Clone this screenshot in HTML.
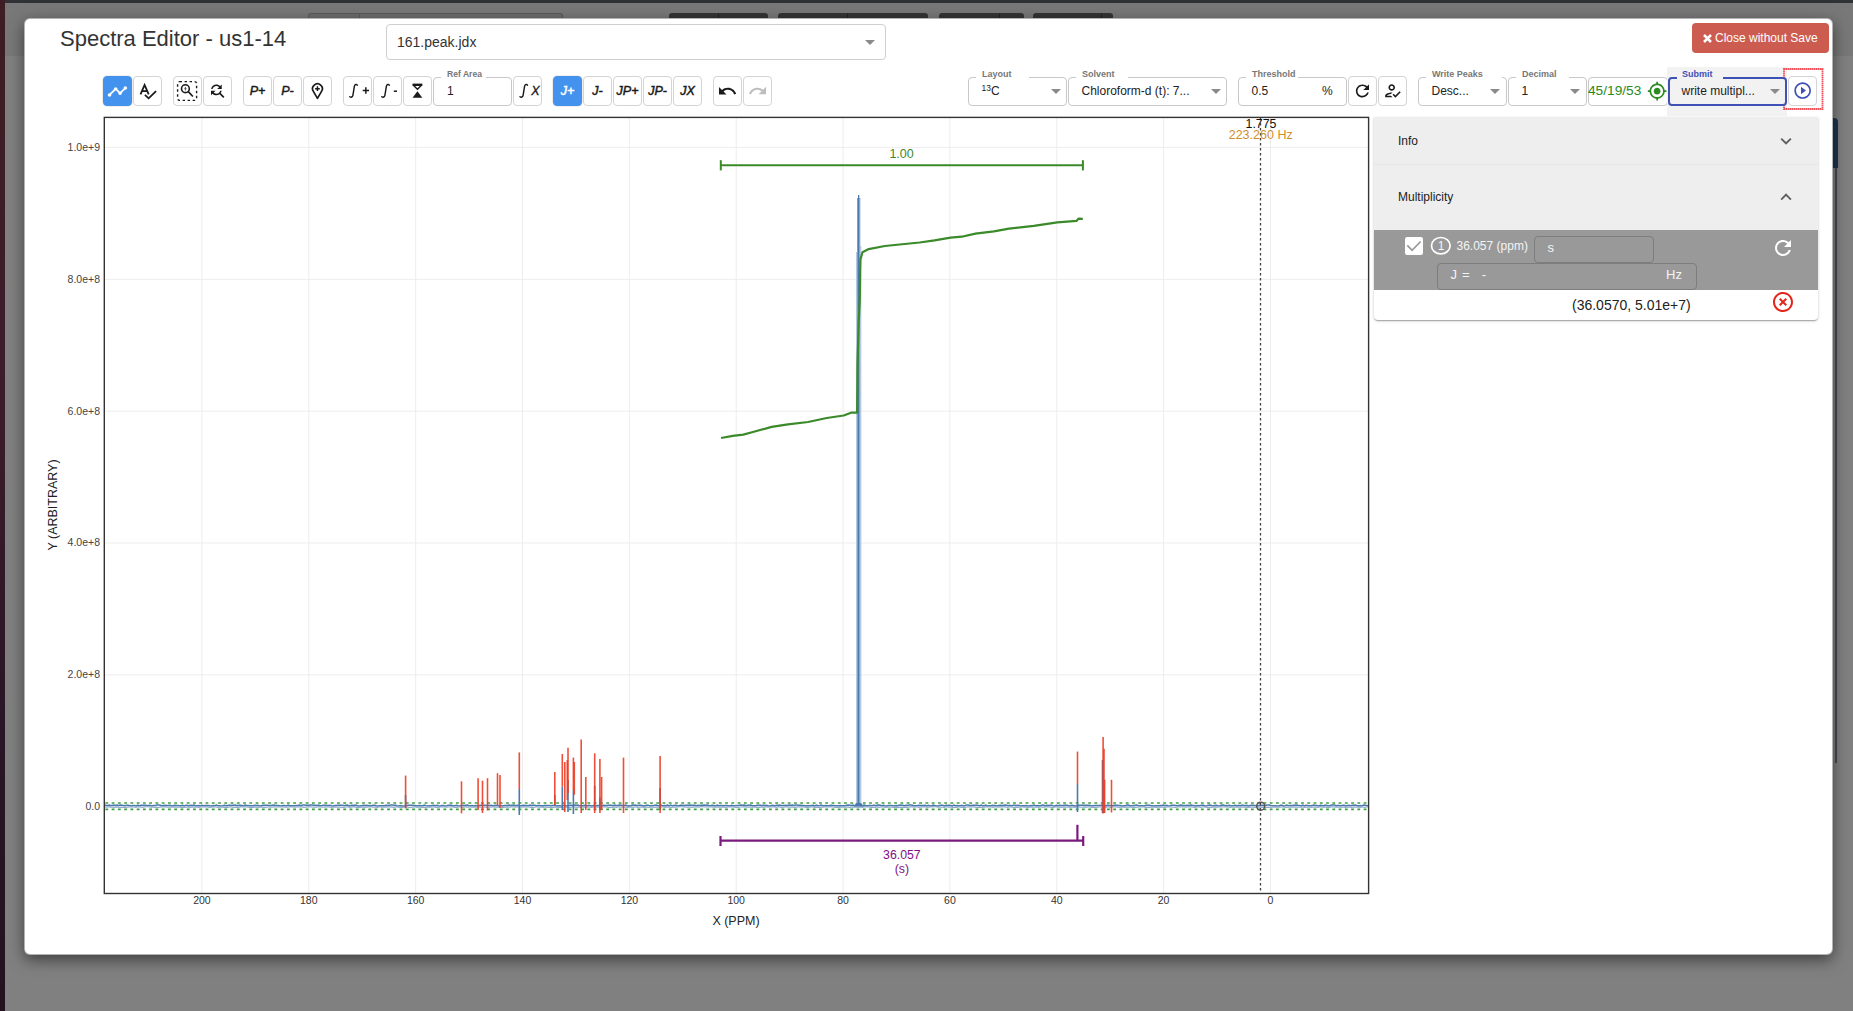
<!DOCTYPE html>
<html><head><meta charset="utf-8">
<style>
*{box-sizing:border-box;margin:0;padding:0}
html,body{width:1853px;height:1011px;overflow:hidden}
body{position:relative;background:#808080;font-family:"Liberation Sans",sans-serif;color:#333}
.abs{position:absolute}
#topbar{left:0;top:0;width:1853px;height:3px;background:#303134}
#lstrip{left:0;top:0;width:5px;height:1011px;background:linear-gradient(#3e1d24,#3b1c2a 40%,#2a1626 70%,#22121e)}
.bgbtn{position:absolute;top:13px;height:8px;border-radius:3px 3px 0 0;background:#343434}
.bgbtn i{position:absolute;top:0;width:1px;height:8px;background:#222}
#rstrip{left:1833px;top:118px;width:5px;height:50px;background:#1e3350;border-radius:0 4px 0 0}
#rline{left:1835px;top:168px;width:2px;height:595px;background:#474a50}
#modal{left:24px;top:18px;width:1809px;height:937px;background:#fff;border:1px solid rgba(0,0,0,.3);border-radius:6px;box-shadow:0 5px 15px rgba(0,0,0,.5)}
#title{left:60px;top:26px;font-size:22px;color:#333;white-space:nowrap;line-height:26px}
#filesel{left:385.5px;top:24px;width:500px;height:35.5px;border:1px solid #cfcfcf;border-radius:4px}
#filesel span{position:absolute;left:10.5px;top:9px;font-size:14px;line-height:16px;color:#333}
.caret{position:absolute;width:0;height:0;border-left:5px solid transparent;border-right:5px solid transparent;border-top:5px solid #8a8a8a}
.btn{position:absolute;top:76px;width:29px;height:29.5px;border:1px solid #d4d4d4;border-radius:4px;background:#fff}
.btn.on{background:#4393ee;border-color:#4393ee;box-shadow:0 0 0 0.6px rgba(215,200,185,.6)}
.btn svg{position:absolute;left:-1px;top:-1px;overflow:visible}
.btxt{position:absolute;left:-1px;top:0;width:29px;text-align:center;font-size:12.5px;font-style:italic;line-height:29px;color:#1a1a1a;-webkit-text-stroke:0.45px #1a1a1a}
.fld{position:absolute;top:76.5px;height:29px;border:1px solid #c8c8c8;border-radius:4px;background:#fff}
.notch{position:absolute;top:75px;height:3px;background:#fff}
.lbl{position:absolute;top:68.5px;font-size:9px;font-weight:bold;color:#777;line-height:11px;white-space:nowrap}
.val{position:absolute;top:84px;font-size:12px;color:#222;line-height:14px;white-space:nowrap}
#closebtn{left:1691.5px;top:23px;width:137px;height:30px;background:#cd5c50;border-radius:4px;color:#fff;font-size:12px;line-height:30px;white-space:nowrap}
#panel{left:1374px;top:117px;width:444px;height:202.5px;background:#fff;border-radius:0 0 4px 4px;box-shadow:0px 1px 3px 0px rgba(0,0,0,0.2),0px 1px 1px 0px rgba(0,0,0,0.14),0px 2px 1px -1px rgba(0,0,0,0.12)}
.ph{position:absolute;left:0;width:444px;background:#eeeeee}
.pht{position:absolute;left:24px;font-size:12px;color:#222;line-height:14px}
svg text{font-family:"Liberation Sans",sans-serif}
.g{stroke:#ededed;stroke-width:1}
.yl{font-size:10.5px;fill:#444;text-anchor:end}
.xl{font-size:10.5px;fill:#333;text-anchor:middle}
.at{font-size:12.5px;fill:#222;text-anchor:middle}
.th{stroke:#3f9e3f;stroke-width:1.7;stroke-dasharray:2.8 3.46;stroke-dashoffset:5.16}
.rp{stroke:#ee3c24;stroke-width:1.6;opacity:.9}
.sp{fill:none;stroke:#4a79ab;stroke-width:1.5}
.sp2{fill:none;stroke:#8eaad0;stroke-width:1.2}
.bp{stroke:#4a79ab;stroke-width:1.6}
.mp{fill:#4a7fb5;stroke:none}
.ic{fill:none;stroke:#3b8a2a;stroke-width:2.2;stroke-linejoin:round}
.ib{stroke:#3b8a2a;stroke-width:2}
.il{font-size:12.5px;fill:#3b8a2a;text-anchor:middle}
.mb{stroke:#7b1a7e;stroke-width:2.2}
.ml{font-size:12.3px;fill:#800f84;text-anchor:middle}
.cur{stroke:#444;stroke-width:1.3;stroke-dasharray:2.5 2.5}
.cc{fill:none;stroke:#555;stroke-width:1.5}
.c1{font-size:12.4px;fill:#111;text-anchor:middle}
.c2{font-size:12.5px;fill:#d18e2b;text-anchor:middle}
.fr{fill:none;stroke:#333;stroke-width:1.4}
</style></head>
<body>
<div class="abs" style="left:0;top:0;width:1853px;height:55.5px;background:#787878"></div>
<div id="topbar" class="abs"></div>
<div id="lstrip" class="abs"></div>
<div class="bgbtn" style="left:308px;width:255px;background:#6c6c6c;border:1px solid #5a5a5a;border-bottom:none"><i style="left:50px;background:#5a5a5a"></i></div>
<div class="bgbtn" style="left:669px;width:99px"><i style="left:49px"></i></div>
<div class="bgbtn" style="left:778px;width:150px"><i style="left:69px"></i></div>
<div class="bgbtn" style="left:939px;width:85px"><i style="left:60px"></i></div>
<div class="bgbtn" style="left:1033px;width:80px"><i style="left:68px"></i></div>
<div id="rstrip" class="abs"></div>
<div id="rline" class="abs"></div>
<div id="modal" class="abs"></div>

<div id="title" class="abs">Spectra Editor - us1-14</div>
<div id="filesel" class="abs"><span>161.peak.jdx</span><i class="caret" style="left:478px;top:15px"></i></div>

<div id="closebtn" class="abs"><svg class="abs" style="left:11px;top:11px" width="9" height="9" viewBox="0 0 9 9"><path d="M1,1L8,8M8,1L1,8" stroke="#fff" stroke-width="2.5" stroke-linecap="butt"/></svg><span style="position:absolute;left:23.5px;top:0">Close without Save</span></div>

<div class="btn on" style="left:103px"><svg width="29" height="30" viewBox="0 0 29 30"><path transform="translate(3.9,5) scale(0.878)" d="M23 8c0 1.1-.9 2-2 2-.18 0-.35-.02-.51-.07l-3.56 3.55c.05.16.07.34.07.52 0 1.1-.9 2-2 2s-2-.9-2-2c0-.18.02-.36.07-.52l-2.55-2.55c-.16.05-.34.07-.52.07s-.36-.02-.52-.07l-4.55 4.56c.05.16.07.33.07.51 0 1.1-.9 2-2 2s-2-.9-2-2 .9-2 2-2c.18 0 .35.02.51.07l4.56-4.55C8.02 9.36 8 9.18 8 9c0-1.1.9-2 2-2s2 .9 2 2c0 .18-.02.36-.07.52l2.55 2.55c.16-.05.34-.07.52-.07s.36.02.52.07l3.55-3.56C19.02 8.350 19 8.18 19 8c0-1.1.9-2 2-2s2 .9 2 2z" fill="#fff"/></svg></div>
<div class="btn" style="left:133px"><svg width="29" height="30" viewBox="0 0 29 30"><path d="M7.5,18.3 L11.6,9.0 L15.7,18.3 M8.9,15.2 H14.3" fill="none" stroke="#1a1a1a" stroke-width="1.8" stroke-linejoin="miter"/><path d="M11.9,18.9 L15.6,22.3 L23.1,15.2" fill="none" stroke="#1a1a1a" stroke-width="1.8"/></svg></div>
<div class="btn" style="left:173px"><svg width="29" height="30" viewBox="0 0 29 30"><rect x="4.6" y="5.6" width="19" height="18.8" rx="2" fill="none" stroke="#1a1a1a" stroke-width="1.4" stroke-dasharray="2.4 2.6"/><circle cx="12.4" cy="12.7" r="3.9" fill="none" stroke="#1a1a1a" stroke-width="1.6"/><path d="M15.3,15.7 L19.9,20.5" stroke="#1a1a1a" stroke-width="1.7"/><path d="M12.4,10.9 V14.5 M11.3,12.7 H13.5" stroke="#1a1a1a" stroke-width="0.9" opacity="0.8"/></svg></div>
<div class="btn" style="left:203px"><svg width="29" height="30" viewBox="0 0 29 30"><path transform="translate(4.94,5.44) scale(0.766)" d="M11 6c1.38 0 2.630.56 3.54 1.46L12 10h6V4l-2.05 2.05C14.68 4.78 12.93 4 11 4c-3.53 0-6.43 2.61-6.92 6H6.1c.46-2.28 2.48-4 4.9-4zm5.64 9.14c.66-.9 1.12-1.97 1.28-3.14H15.9c-.46 2.28-2.48 4-4.9 4-1.38 0-2.63-.56-3.54-1.46L10 12H4v6l2.05-2.05C7.32 17.22 9.07 18 11 18c1.55 0 2.98-.51 4.14-1.36L20 21.49 21.49 20l-4.85-4.86z" fill="#1a1a1a"/></svg></div>
<div class="btn" style="left:243px"><div class="btxt">P+</div></div>
<div class="btn" style="left:273px"><div class="btxt">P-</div></div>
<div class="btn" style="left:303px"><svg width="29" height="30" viewBox="0 0 29 30"><path d="M14.45,22.4 L10.5,15.6 A4.85,4.85 0 1 1 18.4,15.6 Z" fill="none" stroke="#1a1a1a" stroke-width="1.7" stroke-linejoin="round"/><path d="M14.45,10.2 V15.1 M12.1,12.65 H16.8" stroke="#1a1a1a" stroke-width="1.5"/></svg></div>
<div class="btn" style="left:343px"><svg width="29" height="30" viewBox="0 0 29 30"><path transform="translate(0,0)" d="M14.3,9.2 C13.6,8.1 11.9,8.2 11.4,10.1 L9.9,19.3 C9.5,21.2 7.9,21.6 6.8,20.7" fill="none" stroke="#1a1a1a" stroke-width="1.45" stroke-linecap="round"/><path d="M19.7,14.5 H26 M22.85,11.3 V17.7" stroke="#1a1a1a" stroke-width="1.5"/></svg></div>
<div class="btn" style="left:373px"><svg width="29" height="30" viewBox="0 0 29 30"><path transform="translate(2,0)" d="M14.3,9.2 C13.6,8.1 11.9,8.2 11.4,10.1 L9.9,19.3 C9.5,21.2 7.9,21.6 6.8,20.7" fill="none" stroke="#1a1a1a" stroke-width="1.45" stroke-linecap="round"/><path d="M20.8,15.2 H24" stroke="#1a1a1a" stroke-width="1.5"/></svg></div>
<div class="btn" style="left:403px"><svg width="29" height="30" viewBox="0 0 29 30"><path d="M9.6,8.5 H19.3" stroke="#1a1a1a" stroke-width="1.8"/><path d="M10.6,9.4 L14.45,13.3 L18.3,9.4 Z" fill="none" stroke="#1a1a1a" stroke-width="1.4" stroke-linejoin="miter"/><path d="M14.45,15.3 L19.3,21.8 H9.6 Z" fill="#1a1a1a"/></svg></div>
<div class="fld" style="left:433px;width:79px"></div>
<div class="notch" style="left:441px;width:45px"></div>
<div class="lbl" style="left:447px;font-size:8.6px">Ref Area</div>
<div class="val" style="left:447px;font-size:12px">1</div>
<div class="btn" style="left:513px"><svg width="29" height="30" viewBox="0 0 29 30"><path transform="translate(0.2,0)" d="M14.3,9.2 C13.6,8.1 11.9,8.2 11.4,10.1 L9.9,19.3 C9.5,21.2 7.9,21.6 6.8,20.7" fill="none" stroke="#1a1a1a" stroke-width="1.45" stroke-linecap="round"/><text x="22.4" y="18.7" font-size="12.5" font-style="italic" text-anchor="middle" fill="#1a1a1a" stroke="#1a1a1a" stroke-width="0.35">X</text></svg></div>
<div class="btn on" style="left:553px"><div class="btxt" style="color:#fff;-webkit-text-stroke-color:#fff">J+</div></div>
<div class="btn" style="left:583px"><div class="btxt">J-</div></div>
<div class="btn" style="left:613px"><div class="btxt">JP+</div></div>
<div class="btn" style="left:643px"><div class="btxt">JP-</div></div>
<div class="btn" style="left:673px"><div class="btxt">JX</div></div>
<div class="btn" style="left:713px"><svg width="29" height="30" viewBox="0 0 29 30"><path transform="translate(4.3,5) scale(0.84)" d="M12.5 8c-2.65 0-5.05.99-6.9 2.6L2 7v9h9l-3.62-3.62c1.39-1.16 3.16-1.88 5.12-1.88 3.54 0 6.55 2.31 7.6 5.5l2.37-.78C21.08 11.03 17.15 8 12.5 8z" fill="#1a1a1a"/></svg></div>
<div class="btn" style="left:743px"><svg width="29" height="30" viewBox="0 0 29 30"><path transform="translate(4.8,5) scale(0.83)" d="M18.4 10.6C16.55 8.99 14.15 8 11.5 8c-4.65 0-8.58 3.03-9.960 7.22L3.9 16c1.05-3.19 4.05-5.5 7.6-5.5 1.95 0 3.73.72 5.12 1.88L13 16h9V7l-3.6 3.6z" fill="#bdbdbd"/></svg></div>
<div class="fld" style="left:968px;width:99px;background:#fff;border:1px solid #c8c8c8"></div><div class="notch" style="left:976px;width:53px;background:#fff"></div><div class="lbl" style="left:982px;color:#777">Layout</div>
<div class="val" style="left:981.5px"><span style="font-size:8.5px;position:relative;top:-4px">13</span>C</div>
<i class="caret" style="left:1050.5px;top:89px"></i>
<div class="fld" style="left:1068px;width:159px;background:#fff;border:1px solid #c8c8c8"></div><div class="notch" style="left:1076px;width:52px;background:#fff"></div><div class="lbl" style="left:1082px;color:#777">Solvent</div>
<div class="val" style="left:1081.5px">Chloroform-d (t): 7...</div>
<i class="caret" style="left:1210.5px;top:89px"></i>
<div class="fld" style="left:1238px;width:109px;background:#fff;border:1px solid #c8c8c8"></div><div class="notch" style="left:1246px;width:52px;background:#fff"></div><div class="lbl" style="left:1252px;color:#777">Threshold</div>
<div class="val" style="left:1251.5px">0.5</div>
<div class="val" style="left:1322px">%</div>
<div class="btn" style="left:1348px"><svg width="29" height="30" viewBox="0 0 29 30"><path transform="translate(4.6,5.1) scale(0.82)" d="M17.65 6.35C16.2 4.9 14.21 4 12 4c-4.42 0-7.99 3.58-7.99 8s3.57 8 7.99 8c3.73 0 6.84-2.55 7.73-6h-2.08c-.82 2.33-3.04 4-5.65 4-3.31 0-6-2.69-6-6s2.69-6 6-6c1.66 0 3.14.69 4.22 1.78L13 11h7V4l-2.35 2.35z" fill="#1a1a1a"/></svg></div>
<div class="btn" style="left:1378px"><svg width="29" height="30" viewBox="0 0 29 30"><path transform="translate(4.7,4.9) scale(0.82)" d="M5 18c.2-.63 2.57-1.68 4.96-1.94l2.04-2c-.39-.04-.68-.06-1-.06-2.67 0-8 1.34-8 4v2h9l-2-2H5zm6-6c2.21 0 4-1.790 4-4s-1.79-4-4-4-4 1.79-4 4 1.79 4 4 4zm0-6c1.1 0 2 .9 2 2s-.9 2-2 2-2-.9-2-2 .9-2 2-2zM15.47 20.5L12 17l1.4-1.41 2.07 2.08 5.13-5.17 1.4 1.41z" fill="#1a1a1a"/></svg></div>
<div class="fld" style="left:1418px;width:89px;background:#fff;border:1px solid #c8c8c8"></div><div class="notch" style="left:1426px;width:76px;background:#fff"></div><div class="lbl" style="left:1432px;color:#777">Write Peaks</div>
<div class="val" style="left:1431.5px">Desc...</div>
<i class="caret" style="left:1490px;top:89px"></i>
<div class="fld" style="left:1508px;width:79px;background:#fff;border:1px solid #c8c8c8"></div><div class="notch" style="left:1516px;width:53px;background:#fff"></div><div class="lbl" style="left:1522px;color:#777">Decimal</div>
<div class="val" style="left:1521.5px">1</div>
<i class="caret" style="left:1570px;top:89px"></i>
<div class="fld" style="left:1588px;width:79.5px"></div>
<div class="val" style="left:1588px;top:83px;color:#2a8a1e;font-size:13.7px;line-height:16px">45/19/53</div>
<svg class="abs" style="left:1647.4px;top:80.9px;overflow:visible" width="20" height="20" viewBox="0 0 20 20"><path transform="translate(0,0) scale(0.845)" d="M12 8c-2.21 0-4 1.79-4 4s1.79 4 4 4 4-1.79 4-4-1.79-4-4-4zm8.94 3c-.46-4.17-3.77-7.48-7.94-7.94V1h-2v2.06C6.83 3.52 3.52 6.83 3.06 11H1v2h2.06c.46 4.17 3.77 7.48 7.94 7.94V23h2v-2.06c4.17-.46 7.48-3.77 7.94-7.94H23v-2h-2.06zM12 19c-3.87 0-7-3.13-7-7s3.13-7 7-7 7 3.13 7 7-3.13 7-7 7z" fill="#2a8a1e"/></svg>
<div class="abs" style="left:1667px;top:67px;width:120px;height:49px;background:#f2f2f2"></div>
<svg class="abs" style="left:1783px;top:67.5px" width="41" height="42"><rect x="1" y="1" width="38.5" height="40" fill="none" stroke="#f2505a" stroke-width="1.8" stroke-dasharray="1.6 0.4"/></svg>
<div class="fld" style="left:1668px;width:119px;background:#f2f2f2;border:2px solid #3f51b5"></div><div class="notch" style="left:1677px;width:46px;background:#f2f2f2;top:74px;height:6px"></div><div class="lbl" style="left:1682px;color:#3f51b5">Submit</div>
<div class="val" style="left:1681.5px">write multipl...</div>
<i class="caret" style="left:1770px;top:89px"></i>
<div class="btn" style="left:1788px"><svg width="29" height="30" viewBox="0 0 29 30"><path transform="translate(4.7,4.6) scale(0.83)" d="M10 16.5l6-4.5-6-4.5v9zM12 2C6.48 2 2 6.48 2 12s4.48 10 10 10 10-4.48 10-10S17.52 2 12 2zm0 18c-4.41 0-8-3.59-8-8s3.59-8 8-8 8 3.59 8 8-3.59 8-8 8z" fill="#3f51b5"/></svg></div>

<svg class="abs" style="left:0;top:0" width="1853" height="1011" viewBox="0 0 1853 1011">
<line x1="201.9" y1="117.4" x2="201.9" y2="893.5" class="g"/>
<line x1="308.8" y1="117.4" x2="308.8" y2="893.5" class="g"/>
<line x1="415.7" y1="117.4" x2="415.7" y2="893.5" class="g"/>
<line x1="522.5" y1="117.4" x2="522.5" y2="893.5" class="g"/>
<line x1="629.4" y1="117.4" x2="629.4" y2="893.5" class="g"/>
<line x1="736.2" y1="117.4" x2="736.2" y2="893.5" class="g"/>
<line x1="843.1" y1="117.4" x2="843.1" y2="893.5" class="g"/>
<line x1="949.9" y1="117.4" x2="949.9" y2="893.5" class="g"/>
<line x1="1056.8" y1="117.4" x2="1056.8" y2="893.5" class="g"/>
<line x1="1163.6" y1="117.4" x2="1163.6" y2="893.5" class="g"/>
<line x1="1270.5" y1="117.4" x2="1270.5" y2="893.5" class="g"/>
<line x1="104.3" y1="806.8" x2="1368.6" y2="806.8" class="g"/>
<line x1="104.3" y1="674.9" x2="1368.6" y2="674.9" class="g"/>
<line x1="104.3" y1="543.0" x2="1368.6" y2="543.0" class="g"/>
<line x1="104.3" y1="411.2" x2="1368.6" y2="411.2" class="g"/>
<line x1="104.3" y1="279.3" x2="1368.6" y2="279.3" class="g"/>
<line x1="104.3" y1="147.4" x2="1368.6" y2="147.4" class="g"/>
<text x="100" y="810.1" class="yl">0.0</text>
<text x="100" y="678.2" class="yl">2.0e+8</text>
<text x="100" y="546.3" class="yl">4.0e+8</text>
<text x="100" y="414.5" class="yl">6.0e+8</text>
<text x="100" y="282.6" class="yl">8.0e+8</text>
<text x="100" y="150.7" class="yl">1.0e+9</text>
<text x="201.9" y="903.5" class="xl">200</text>
<text x="308.8" y="903.5" class="xl">180</text>
<text x="415.7" y="903.5" class="xl">160</text>
<text x="522.5" y="903.5" class="xl">140</text>
<text x="629.4" y="903.5" class="xl">120</text>
<text x="736.2" y="903.5" class="xl">100</text>
<text x="843.1" y="903.5" class="xl">80</text>
<text x="949.9" y="903.5" class="xl">60</text>
<text x="1056.8" y="903.5" class="xl">40</text>
<text x="1163.6" y="903.5" class="xl">20</text>
<text x="1270.5" y="903.5" class="xl">0</text>
<line x1="104.3" y1="803.0" x2="1368.6" y2="803.0" class="th"/>
<line x1="104.3" y1="809.3" x2="1368.6" y2="809.3" class="th"/>
<polyline class="sp" points="104.3,805.34 105.9,805.19 107.5,805.64 109.1,805.12 110.7,805.53 112.3,805.38 113.9,805.10 115.5,805.51 117.1,805.08 118.7,805.44 120.3,805.11 121.9,805.13 123.5,805.43 125.1,805.79 126.7,805.16 128.3,805.25 129.9,805.61 131.5,805.90 133.1,805.57 134.7,805.41 136.3,805.93 137.9,805.09 139.5,805.82 141.1,805.31 142.7,805.18 144.3,805.16 145.9,805.33 147.5,805.78 149.1,805.21 150.7,805.57 152.3,805.63 153.9,805.39 155.5,805.54 157.1,805.11 158.7,805.10 160.3,805.24 161.9,805.66 163.5,805.43 165.1,805.33 166.7,805.58 168.3,805.46 169.9,805.32 171.5,805.76 173.1,805.68 174.7,805.27 176.3,805.57 177.9,805.52 179.5,805.84 181.1,805.71 182.7,805.31 184.3,805.93 185.9,805.16 187.5,805.43 189.1,805.73 190.7,805.19 192.3,805.49 193.9,805.09 195.5,805.65 197.1,805.74 198.7,805.57 200.3,805.84 201.9,805.33 203.5,805.68 205.1,805.58 206.7,805.57 208.3,805.46 209.9,805.81 211.5,805.90 213.1,805.48 214.7,805.65 216.3,805.10 217.9,805.68 219.5,805.63 221.1,805.94 222.7,805.79 224.3,805.31 225.9,805.40 227.5,805.65 229.1,805.07 230.7,805.47 232.3,805.20 233.9,805.16 235.5,805.10 237.1,805.74 238.7,805.17 240.3,805.27 241.9,805.40 243.5,805.83 245.1,805.12 246.7,805.45 248.3,805.54 249.9,805.85 251.5,805.79 253.1,805.83 254.7,805.30 256.3,805.42 257.9,805.37 259.5,805.85 261.1,805.91 262.7,805.19 264.3,805.21 265.9,805.26 267.5,805.26 269.1,805.49 270.7,805.58 272.3,805.29 273.9,805.05 275.5,805.43 277.1,805.38 278.7,805.56 280.3,805.91 281.9,805.67 283.5,805.51 285.1,805.61 286.7,805.66 288.3,805.10 289.9,805.86 291.5,805.75 293.1,805.84 294.7,805.77 296.3,805.40 297.9,805.41 299.5,805.14 301.1,805.62 302.7,805.11 304.3,805.11 305.9,805.24 307.5,805.20 309.1,805.36 310.7,805.10 312.3,805.05 313.9,805.19 315.5,805.14 317.1,805.38 318.7,805.07 320.3,805.84 321.9,805.60 323.5,805.18 325.1,805.28 326.7,805.36 328.3,805.38 329.9,805.16 331.5,805.81 333.1,805.94 334.7,805.47 336.3,805.49 337.9,805.13 339.5,805.14 341.1,805.36 342.7,805.29 344.3,805.80 345.9,805.20 347.5,805.07 349.1,805.91 350.7,805.53 352.3,805.18 353.9,805.54 355.5,805.07 357.1,805.53 358.7,805.93 360.3,805.83 361.9,805.68 363.5,805.29 365.1,805.38 366.7,805.20 368.3,805.74 369.9,805.53 371.5,805.75 373.1,805.35 374.7,805.25 376.3,805.78 377.9,805.94 379.5,805.82 381.1,805.78 382.7,805.79 384.3,805.72 385.9,805.25 387.5,805.52 389.1,805.37 390.7,805.08 392.3,805.08 393.9,805.30 395.5,805.28 397.1,805.67 398.7,805.91 400.3,805.45 401.9,805.89 403.5,805.94 405.1,805.91 406.7,805.38 408.3,805.25 409.9,805.25 411.5,805.23 413.1,805.23 414.7,805.61 416.3,805.86 417.9,805.81 419.5,805.48 421.1,805.64 422.7,805.77 424.3,805.13 425.9,805.64 427.5,805.87 429.1,805.75 430.7,805.73 432.3,805.48 433.9,805.21 435.5,805.76 437.1,805.35 438.7,805.77 440.3,805.92 441.9,805.41 443.5,805.41 445.1,805.90 446.7,805.70 448.3,805.20 449.9,805.16 451.5,805.19 453.1,805.86 454.7,805.78 456.3,805.18 457.9,805.79 459.5,805.93 461.1,805.64 462.7,805.37 464.3,805.54 465.9,805.17 467.5,805.06 469.1,805.92 470.7,805.63 472.3,805.52 473.9,805.89 475.5,805.44 477.1,805.83 478.7,805.79 480.3,805.24 481.9,805.28 483.5,805.31 485.1,805.27 486.7,805.58 488.3,805.28 489.9,805.43 491.5,805.17 493.1,805.87 494.7,805.37 496.3,805.46 497.9,805.58 499.5,805.86 501.1,805.43 502.7,805.88 504.3,805.50 505.9,805.53 507.5,805.52 509.1,805.07 510.7,805.45 512.3,805.21 513.9,805.05 515.5,805.77 517.1,805.21 518.7,805.48 520.3,805.70 521.9,805.55 523.5,805.34 525.1,805.52 526.7,805.55 528.3,805.76 529.9,805.15 531.5,805.55 533.1,805.27 534.7,805.30 536.3,805.75 537.9,805.51 539.5,805.56 541.1,805.73 542.7,805.87 544.3,805.45 545.9,805.60 547.5,805.50 549.1,805.51 550.7,805.67 552.3,805.46 553.9,805.53 555.5,805.48 557.1,805.90 558.7,805.68 560.3,805.84 561.9,805.90 563.5,805.28 565.1,805.55 566.7,805.90 568.3,805.81 569.9,805.17 571.5,805.16 573.1,805.45 574.7,805.12 576.3,805.27 577.9,805.12 579.5,805.65 581.1,805.76 582.7,805.86 584.3,805.19 585.9,805.69 587.5,805.64 589.1,805.18 590.7,805.84 592.3,805.92 593.9,805.25 595.5,805.91 597.1,805.41 598.7,805.49 600.3,805.94 601.9,805.80 603.5,805.20 605.1,805.44 606.7,805.51 608.3,805.36 609.9,805.23 611.5,805.34 613.1,805.70 614.7,805.07 616.3,805.55 617.9,805.45 619.5,805.07 621.1,805.35 622.7,805.61 624.3,805.51 625.9,805.11 627.5,805.94 629.1,805.76 630.7,805.92 632.3,805.14 633.9,805.29 635.5,805.09 637.1,805.75 638.7,805.29 640.3,805.17 641.9,805.43 643.5,805.87 645.1,805.79 646.7,805.28 648.3,805.18 649.9,805.88 651.5,805.56 653.1,805.68 654.7,805.13 656.3,805.10 657.9,805.67 659.5,805.43 661.1,805.12 662.7,805.89 664.3,805.62 665.9,805.77 667.5,805.13 669.1,805.82 670.7,805.11 672.3,805.83 673.9,805.46 675.5,805.36 677.1,805.55 678.7,805.88 680.3,805.29 681.9,805.17 683.5,805.52 685.1,805.26 686.7,805.15 688.3,805.20 689.9,805.10 691.5,805.23 693.1,805.33 694.7,805.32 696.3,805.73 697.9,805.31 699.5,805.50 701.1,805.21 702.7,805.36 704.3,805.07 705.9,805.28 707.5,805.06 709.1,805.71 710.7,805.55 712.3,805.22 713.9,805.48 715.5,805.89 717.1,805.15 718.7,805.79 720.3,805.44 721.9,805.50 723.5,805.80 725.1,805.40 726.7,805.51 728.3,805.67 729.9,805.93 731.5,805.36 733.1,805.80 734.7,805.69 736.3,805.62 737.9,805.41 739.5,805.36 741.1,805.10 742.7,805.17 744.3,805.11 745.9,805.72 747.5,805.28 749.1,805.20 750.7,805.13 752.3,805.81 753.9,805.83 755.5,805.65 757.1,805.30 758.7,805.27 760.3,805.31 761.9,805.46 763.5,805.19 765.1,805.45 766.7,805.29 768.3,805.92 769.9,805.93 771.5,805.54 773.1,805.27 774.7,805.92 776.3,805.33 777.9,805.37 779.5,805.05 781.1,805.39 782.7,805.48 784.3,805.50 785.9,805.23 787.5,805.50 789.1,805.05 790.7,805.29 792.3,805.13 793.9,805.41 795.5,805.09 797.1,805.07 798.7,805.32 800.3,805.26 801.9,805.58 803.5,805.53 805.1,805.73 806.7,805.64 808.3,805.69 809.9,805.84 811.5,805.40 813.1,805.34 814.7,805.94 816.3,805.18 817.9,805.70 819.5,805.63 821.1,805.09 822.7,805.80 824.3,805.85 825.9,805.61 827.5,805.71 829.1,805.78 830.7,805.18 832.3,805.52 833.9,805.50 835.5,805.80 837.1,805.77 838.7,805.79 840.3,805.58 841.9,805.85 843.5,805.66 845.1,805.67 846.7,805.26 848.3,805.08 849.9,805.17 851.5,805.37 853.1,805.14 854.7,805.80 856.3,805.55 857.9,805.61 859.5,805.61 861.1,805.66 862.7,805.49 864.3,805.05 865.9,805.77 867.5,805.72 869.1,805.50 870.7,805.53 872.3,805.64 873.9,805.11 875.5,805.71 877.1,805.28 878.7,805.12 880.3,805.29 881.9,805.71 883.5,805.23 885.1,805.72 886.7,805.93 888.3,805.49 889.9,805.39 891.5,805.48 893.1,805.67 894.7,805.74 896.3,805.61 897.9,805.63 899.5,805.12 901.1,805.18 902.7,805.28 904.3,805.72 905.9,805.32 907.5,805.56 909.1,805.06 910.7,805.10 912.3,805.29 913.9,805.65 915.5,805.67 917.1,805.66 918.7,805.31 920.3,805.51 921.9,805.47 923.5,805.47 925.1,805.16 926.7,805.85 928.3,805.23 929.9,805.93 931.5,805.89 933.1,805.07 934.7,805.46 936.3,805.79 937.9,805.92 939.5,805.45 941.1,805.29 942.7,805.24 944.3,805.90 945.9,805.24 947.5,805.57 949.1,805.18 950.7,805.52 952.3,805.91 953.9,805.17 955.5,805.79 957.1,805.51 958.7,805.85 960.3,805.68 961.9,805.26 963.5,805.86 965.1,805.49 966.7,805.07 968.3,805.05 969.9,805.49 971.5,805.46 973.1,805.32 974.7,805.18 976.3,805.36 977.9,805.33 979.5,805.81 981.1,805.05 982.7,805.73 984.3,805.81 985.9,805.16 987.5,805.88 989.1,805.69 990.7,805.86 992.3,805.31 993.9,805.38 995.5,805.40 997.1,805.95 998.7,805.58 1000.3,805.37 1001.9,805.44 1003.5,805.30 1005.1,805.09 1006.7,805.14 1008.3,805.80 1009.9,805.31 1011.5,805.89 1013.1,805.27 1014.7,805.29 1016.3,805.51 1017.9,805.22 1019.5,805.39 1021.1,805.91 1022.7,805.85 1024.3,805.78 1025.9,805.62 1027.5,805.87 1029.1,805.90 1030.7,805.54 1032.3,805.70 1033.9,805.09 1035.5,805.71 1037.1,805.46 1038.7,805.73 1040.3,805.63 1041.9,805.31 1043.5,805.09 1045.1,805.88 1046.7,805.16 1048.3,805.47 1049.9,805.36 1051.5,805.32 1053.1,805.72 1054.7,805.93 1056.3,805.28 1057.9,805.64 1059.5,805.32 1061.1,805.55 1062.7,805.40 1064.3,805.20 1065.9,805.20 1067.5,805.24 1069.1,805.87 1070.7,805.50 1072.3,805.25 1073.9,805.87 1075.5,805.95 1077.1,805.45 1078.7,805.18 1080.3,805.22 1081.9,805.13 1083.5,805.36 1085.1,805.13 1086.7,805.27 1088.3,805.28 1089.9,805.56 1091.5,805.85 1093.1,805.72 1094.7,805.42 1096.3,805.42 1097.9,805.52 1099.5,805.39 1101.1,805.35 1102.7,805.11 1104.3,805.30 1105.9,805.92 1107.5,805.16 1109.1,805.50 1110.7,805.62 1112.3,805.83 1113.9,805.24 1115.5,805.29 1117.1,805.27 1118.7,805.41 1120.3,805.45 1121.9,805.91 1123.5,805.81 1125.1,805.84 1126.7,805.07 1128.3,805.08 1129.9,805.69 1131.5,805.86 1133.1,805.48 1134.7,805.58 1136.3,805.05 1137.9,805.40 1139.5,805.88 1141.1,805.79 1142.7,805.82 1144.3,805.93 1145.9,805.27 1147.5,805.15 1149.1,805.19 1150.7,805.52 1152.3,805.66 1153.9,805.90 1155.5,805.70 1157.1,805.63 1158.7,805.74 1160.3,805.46 1161.9,805.55 1163.5,805.09 1165.1,805.75 1166.7,805.26 1168.3,805.88 1169.9,805.63 1171.5,805.32 1173.1,805.17 1174.7,805.28 1176.3,805.62 1177.9,805.68 1179.5,805.15 1181.1,805.11 1182.7,805.52 1184.3,805.57 1185.9,805.40 1187.5,805.25 1189.1,805.59 1190.7,805.06 1192.3,805.32 1193.9,805.46 1195.5,805.91 1197.1,805.63 1198.7,805.85 1200.3,805.48 1201.9,805.26 1203.5,805.27 1205.1,805.91 1206.7,805.68 1208.3,805.33 1209.9,805.07 1211.5,805.50 1213.1,805.66 1214.7,805.43 1216.3,805.28 1217.9,805.65 1219.5,805.88 1221.1,805.25 1222.7,805.08 1224.3,805.35 1225.9,805.43 1227.5,805.66 1229.1,805.23 1230.7,805.77 1232.3,805.72 1233.9,805.50 1235.5,805.23 1237.1,805.92 1238.7,805.33 1240.3,805.79 1241.9,805.26 1243.5,805.25 1245.1,805.73 1246.7,805.32 1248.3,805.91 1249.9,805.50 1251.5,805.22 1253.1,805.25 1254.7,805.43 1256.3,805.65 1257.9,805.90 1259.5,805.18 1261.1,805.40 1262.7,805.24 1264.3,805.93 1265.9,805.18 1267.5,805.10 1269.1,805.10 1270.7,805.40 1272.3,805.86 1273.9,805.85 1275.5,805.71 1277.1,805.95 1278.7,805.89 1280.3,805.35 1281.9,805.22 1283.5,805.89 1285.1,805.72 1286.7,805.08 1288.3,805.65 1289.9,805.39 1291.5,805.39 1293.1,805.35 1294.7,805.20 1296.3,805.05 1297.9,805.30 1299.5,805.37 1301.1,805.91 1302.7,805.16 1304.3,805.92 1305.9,805.24 1307.5,805.37 1309.1,805.79 1310.7,805.79 1312.3,805.44 1313.9,805.09 1315.5,805.48 1317.1,805.39 1318.7,805.88 1320.3,805.22 1321.9,805.38 1323.5,805.86 1325.1,805.08 1326.7,805.42 1328.3,805.78 1329.9,805.74 1331.5,805.09 1333.1,805.08 1334.7,805.11 1336.3,805.88 1337.9,805.28 1339.5,805.72 1341.1,805.86 1342.7,805.36 1344.3,805.30 1345.9,805.91 1347.5,805.61 1349.1,805.29 1350.7,805.69 1352.3,805.33 1353.9,805.30 1355.5,805.05 1357.1,805.73 1358.7,805.87 1360.3,805.62 1361.9,805.90 1363.5,805.07 1365.1,805.26 1366.7,805.48 1368.3,805.91"/>
<polyline class="sp2" points="104.3,807.46 106.4,807.01 108.5,806.90 110.6,807.04 112.7,807.09 114.8,807.44 116.9,806.85 119.0,807.34 121.1,807.29 123.2,807.36 125.3,807.32 127.4,807.19 129.5,806.96 131.6,806.96 133.7,806.99 135.8,807.33 137.9,806.76 140.0,806.86 142.1,807.30 144.2,806.90 146.3,806.75 148.4,806.73 150.5,807.14 152.6,806.96 154.7,807.48 156.8,807.41 158.9,807.49 161.0,806.91 163.1,806.77 165.2,806.78 167.3,807.10 169.4,807.27 171.5,807.06 173.6,806.89 175.7,807.03 177.8,807.20 179.9,807.24 182.0,807.30 184.1,807.38 186.2,807.23 188.3,806.80 190.4,807.37 192.5,806.94 194.6,807.15 196.7,807.00 198.8,807.29 200.9,806.86 203.0,806.90 205.1,806.90 207.2,806.82 209.3,807.41 211.4,807.16 213.5,806.96 215.6,807.02 217.7,807.49 219.8,807.11 221.9,806.89 224.0,807.35 226.1,807.22 228.2,807.49 230.3,806.78 232.4,807.08 234.5,807.36 236.6,807.37 238.7,807.43 240.8,806.73 242.9,806.93 245.0,806.80 247.1,806.85 249.2,807.48 251.3,807.17 253.4,807.44 255.5,807.00 257.6,807.39 259.7,807.06 261.8,806.91 263.9,807.32 266.0,807.46 268.1,806.78 270.2,807.18 272.3,807.20 274.4,806.87 276.5,806.99 278.6,806.81 280.7,806.86 282.8,806.90 284.9,807.18 287.0,807.22 289.1,806.86 291.2,806.71 293.3,806.96 295.4,807.24 297.5,806.85 299.6,806.95 301.7,806.86 303.8,807.34 305.9,807.14 308.0,806.75 310.1,806.78 312.2,807.02 314.3,807.14 316.4,807.21 318.5,806.77 320.6,806.83 322.7,807.26 324.8,807.03 326.9,806.93 329.0,806.95 331.1,807.46 333.2,806.95 335.3,807.15 337.4,806.99 339.5,807.03 341.6,807.39 343.7,807.50 345.8,806.99 347.9,806.86 350.0,807.28 352.1,806.86 354.2,806.70 356.3,807.42 358.4,807.04 360.5,807.36 362.6,807.02 364.7,807.41 366.8,807.07 368.9,806.83 371.0,806.71 373.1,807.14 375.2,807.21 377.3,807.43 379.4,806.77 381.5,807.20 383.6,807.00 385.7,807.10 387.8,806.82 389.9,806.93 392.0,807.12 394.1,807.44 396.2,806.79 398.3,807.09 400.4,807.34 402.5,807.47 404.6,806.86 406.7,806.80 408.8,807.45 410.9,807.48 413.0,807.09 415.1,806.74 417.2,807.44 419.3,807.01 421.4,807.42 423.5,807.20 425.6,807.36 427.7,806.83 429.8,807.33 431.9,806.88 434.0,807.02 436.1,807.38 438.2,807.36 440.3,806.85 442.4,806.87 444.5,807.02 446.6,807.11 448.7,807.01 450.8,806.80 452.9,806.90 455.0,807.28 457.1,807.42 459.2,806.73 461.3,807.15 463.4,807.31 465.5,806.73 467.6,807.37 469.7,806.79 471.8,807.18 473.9,807.14 476.0,807.20 478.1,806.94 480.2,807.04 482.3,807.17 484.4,807.04 486.5,807.23 488.6,807.06 490.7,807.05 492.8,806.72 494.9,807.20 497.0,807.09 499.1,806.89 501.2,807.31 503.3,807.32 505.4,807.07 507.5,806.84 509.6,807.08 511.7,806.79 513.8,806.80 515.9,807.04 518.0,806.77 520.1,807.05 522.2,807.11 524.3,806.73 526.4,807.21 528.5,806.77 530.6,807.29 532.7,807.32 534.8,807.11 536.9,806.74 539.0,807.10 541.1,807.00 543.2,807.46 545.3,806.81 547.4,807.39 549.5,807.50 551.6,807.29 553.7,807.35 555.8,806.85 557.9,807.49 560.0,807.09 562.1,807.47 564.2,807.43 566.3,806.83 568.4,807.33 570.5,807.44 572.6,806.75 574.7,806.98 576.8,807.30 578.9,806.83 581.0,807.42 583.1,806.92 585.2,807.35 587.3,806.81 589.4,807.10 591.5,807.44 593.6,806.87 595.7,806.91 597.8,807.10 599.9,806.96 602.0,806.73 604.1,806.85 606.2,806.83 608.3,807.45 610.4,807.24 612.5,807.42 614.6,806.83 616.7,807.33 618.8,806.79 620.9,807.12 623.0,807.21 625.1,806.99 627.2,807.40 629.3,807.14 631.4,807.16 633.5,807.41 635.6,806.78 637.7,807.49 639.8,807.20 641.9,807.02 644.0,807.34 646.1,806.91 648.2,807.49 650.3,807.16 652.4,806.99 654.5,807.31 656.6,807.05 658.7,806.84 660.8,807.29 662.9,806.74 665.0,807.36 667.1,806.90 669.2,807.21 671.3,807.49 673.4,807.17 675.5,807.23 677.6,806.95 679.7,806.70 681.8,806.73 683.9,806.82 686.0,807.19 688.1,807.05 690.2,807.11 692.3,807.42 694.4,806.81 696.5,806.88 698.6,807.22 700.7,806.72 702.8,806.70 704.9,806.98 707.0,806.79 709.1,806.99 711.2,806.88 713.3,807.17 715.4,807.17 717.5,806.86 719.6,807.20 721.7,807.08 723.8,806.81 725.9,807.45 728.0,806.89 730.1,806.82 732.2,806.78 734.3,807.21 736.4,807.40 738.5,807.33 740.6,807.02 742.7,806.91 744.8,806.71 746.9,807.22 749.0,807.15 751.1,806.98 753.2,807.22 755.3,807.06 757.4,807.45 759.5,807.29 761.6,806.90 763.7,807.42 765.8,806.74 767.9,807.13 770.0,807.02 772.1,806.89 774.2,806.75 776.3,807.32 778.4,806.71 780.5,807.14 782.6,807.45 784.7,806.81 786.8,806.86 788.9,807.19 791.0,807.11 793.1,807.21 795.2,807.35 797.3,806.84 799.4,806.95 801.5,806.94 803.6,806.74 805.7,807.41 807.8,807.33 809.9,807.27 812.0,806.71 814.1,807.38 816.2,807.30 818.3,807.07 820.4,807.29 822.5,807.06 824.6,806.88 826.7,806.78 828.8,806.89 830.9,806.73 833.0,806.97 835.1,807.30 837.2,807.26 839.3,807.38 841.4,807.27 843.5,806.91 845.6,807.14 847.7,807.05 849.8,807.33 851.9,807.12 854.0,806.91 856.1,807.21 858.2,807.47 860.3,806.87 862.4,807.40 864.5,806.71 866.6,806.91 868.7,806.89 870.8,807.30 872.9,807.46 875.0,807.30 877.1,806.96 879.2,807.40 881.3,806.96 883.4,806.89 885.5,807.43 887.6,807.20 889.7,807.25 891.8,807.23 893.9,807.48 896.0,807.08 898.1,807.37 900.2,807.26 902.3,807.39 904.4,807.05 906.5,807.28 908.6,807.16 910.7,806.95 912.8,806.87 914.9,807.20 917.0,806.76 919.1,807.43 921.2,806.82 923.3,806.72 925.4,806.79 927.5,807.44 929.6,806.98 931.7,806.81 933.8,806.72 935.9,806.73 938.0,807.25 940.1,807.21 942.2,807.26 944.3,807.29 946.4,806.75 948.5,807.17 950.6,806.99 952.7,807.35 954.8,807.36 956.9,807.41 959.0,806.75 961.1,807.39 963.2,807.43 965.3,807.46 967.4,806.79 969.5,806.86 971.6,806.79 973.7,806.73 975.8,807.38 977.9,807.35 980.0,807.21 982.1,807.36 984.2,807.21 986.3,806.93 988.4,806.78 990.5,806.78 992.6,807.31 994.7,806.86 996.8,806.96 998.9,807.04 1001.0,806.72 1003.1,806.91 1005.2,806.93 1007.3,807.27 1009.4,806.99 1011.5,806.96 1013.6,807.47 1015.7,807.10 1017.8,807.38 1019.9,807.19 1022.0,806.72 1024.1,807.03 1026.2,807.05 1028.3,807.32 1030.4,806.98 1032.5,807.26 1034.6,807.13 1036.7,806.87 1038.8,807.39 1040.9,806.77 1043.0,807.36 1045.1,806.84 1047.2,806.70 1049.3,806.86 1051.4,807.31 1053.5,807.48 1055.6,806.70 1057.7,807.09 1059.8,807.09 1061.9,807.34 1064.0,806.85 1066.1,807.10 1068.2,806.98 1070.3,807.37 1072.4,806.91 1074.5,807.46 1076.6,806.93 1078.7,806.87 1080.8,807.26 1082.9,807.10 1085.0,806.79 1087.1,807.21 1089.2,806.76 1091.3,807.33 1093.4,807.26 1095.5,807.33 1097.6,807.20 1099.7,806.98 1101.8,807.02 1103.9,807.02 1106.0,807.41 1108.1,806.77 1110.2,807.41 1112.3,806.72 1114.4,806.86 1116.5,806.91 1118.6,807.42 1120.7,807.10 1122.8,807.00 1124.9,807.41 1127.0,806.89 1129.1,807.07 1131.2,807.13 1133.3,807.30 1135.4,807.30 1137.5,807.22 1139.6,806.98 1141.7,806.96 1143.8,806.82 1145.9,807.37 1148.0,807.23 1150.1,807.29 1152.2,806.84 1154.3,807.05 1156.4,807.32 1158.5,807.16 1160.6,806.80 1162.7,807.07 1164.8,807.41 1166.9,806.89 1169.0,806.85 1171.1,806.94 1173.2,807.26 1175.3,807.37 1177.4,806.82 1179.5,806.82 1181.6,806.90 1183.7,806.96 1185.8,807.12 1187.9,806.83 1190.0,806.96 1192.1,806.85 1194.2,807.48 1196.3,807.28 1198.4,806.78 1200.5,807.47 1202.6,806.78 1204.7,807.01 1206.8,807.49 1208.9,807.34 1211.0,807.29 1213.1,807.05 1215.2,806.86 1217.3,807.21 1219.4,806.79 1221.5,806.87 1223.6,807.01 1225.7,806.73 1227.8,807.02 1229.9,807.33 1232.0,807.25 1234.1,807.10 1236.2,807.21 1238.3,807.07 1240.4,806.81 1242.5,807.18 1244.6,807.02 1246.7,807.29 1248.8,807.43 1250.9,807.04 1253.0,807.16 1255.1,807.30 1257.2,807.04 1259.3,806.88 1261.4,807.28 1263.5,807.40 1265.6,807.32 1267.7,807.26 1269.8,807.38 1271.9,807.24 1274.0,807.21 1276.1,807.06 1278.2,806.95 1280.3,807.20 1282.4,806.78 1284.5,807.04 1286.6,807.33 1288.7,807.27 1290.8,807.20 1292.9,806.90 1295.0,807.04 1297.1,807.06 1299.2,807.20 1301.3,807.03 1303.4,807.24 1305.5,807.44 1307.6,806.85 1309.7,807.22 1311.8,807.32 1313.9,807.01 1316.0,807.09 1318.1,807.48 1320.2,806.73 1322.3,807.13 1324.4,806.83 1326.5,807.33 1328.6,807.45 1330.7,807.12 1332.8,806.78 1334.9,807.16 1337.0,807.13 1339.1,807.27 1341.2,807.11 1343.3,807.21 1345.4,807.36 1347.5,807.12 1349.6,807.03 1351.7,807.46 1353.8,806.87 1355.9,807.25 1358.0,807.01 1360.1,807.31 1362.2,806.80 1364.3,807.49 1366.4,806.98 1368.5,806.75"/>
<line x1="519.3" y1="789" x2="519.3" y2="815" class="bp"/>
<line x1="562.3" y1="786.5" x2="562.3" y2="810" class="bp"/>
<line x1="568" y1="780" x2="568" y2="812" class="bp"/>
<line x1="573.4" y1="790" x2="573.4" y2="814" class="bp"/>
<line x1="594.7" y1="785.7" x2="594.7" y2="810" class="bp"/>
<line x1="599.9" y1="797.5" x2="599.9" y2="810" class="bp"/>
<line x1="660.1" y1="788" x2="660.1" y2="810" class="bp"/>
<line x1="1077.5" y1="784" x2="1077.5" y2="812" class="bp"/>
<line x1="1102.5" y1="760" x2="1102.5" y2="813" class="bp"/>
<line x1="405.6" y1="795" x2="405.6" y2="808" class="bp"/>
<line x1="554.8" y1="795" x2="554.8" y2="806" class="bp"/>
<line x1="405.6" y1="775.6" x2="405.6" y2="808.4" class="rp"/>
<line x1="461.5" y1="781.3" x2="461.5" y2="813.4" class="rp"/>
<line x1="478.1" y1="778.2" x2="478.1" y2="810" class="rp"/>
<line x1="482.5" y1="780.7" x2="482.5" y2="813" class="rp"/>
<line x1="487.5" y1="778.2" x2="487.5" y2="810.4" class="rp"/>
<line x1="497.5" y1="773.2" x2="497.5" y2="805" class="rp"/>
<line x1="500" y1="775" x2="500" y2="808" class="rp"/>
<line x1="519.3" y1="752.4" x2="519.3" y2="789" class="rp"/>
<line x1="554.8" y1="772" x2="554.8" y2="805" class="rp"/>
<line x1="562.3" y1="754" x2="562.3" y2="786.5" class="rp"/>
<line x1="564.8" y1="762" x2="564.8" y2="812" class="rp"/>
<line x1="568" y1="747.7" x2="568" y2="793" class="rp"/>
<line x1="567.3" y1="760" x2="567.3" y2="800" class="rp"/>
<line x1="573.4" y1="757.6" x2="573.4" y2="790" class="rp"/>
<line x1="574.3" y1="762" x2="574.3" y2="794.7" class="rp"/>
<line x1="581.2" y1="739.6" x2="581.2" y2="813" class="rp"/>
<line x1="585.8" y1="777" x2="585.8" y2="810" class="rp"/>
<line x1="594.7" y1="753.3" x2="594.7" y2="813" class="rp"/>
<line x1="599.9" y1="759" x2="599.9" y2="813" class="rp"/>
<line x1="601.6" y1="777" x2="601.6" y2="810" class="rp"/>
<line x1="623.5" y1="757.6" x2="623.5" y2="813" class="rp"/>
<line x1="660.1" y1="756" x2="660.1" y2="813" class="rp"/>
<line x1="1077.5" y1="751.6" x2="1077.5" y2="784" class="rp"/>
<line x1="1103.1" y1="736.9" x2="1103.1" y2="813.6" class="rp"/>
<line x1="1104" y1="748.8" x2="1104" y2="813" class="rp"/>
<line x1="1104.6" y1="779.8" x2="1104.6" y2="813" class="rp"/>
<line x1="1111.5" y1="779.8" x2="1111.5" y2="812.5" class="rp"/>
<rect x="856" y="252" width="1" height="552" fill="#b5c9e0"/>
<rect x="857" y="198" width="1" height="606" fill="#7aa0c8"/>
<rect x="858" y="195" width="1.3" height="610" fill="#4a79ab"/>
<rect x="859.3" y="198" width="1" height="606" fill="#6f95c0"/>
<rect x="860.3" y="246" width="1" height="558" fill="#a9c0dc"/>
<path d="M854,806.5 L856,803 L861,803 L864,806.5 Z" fill="#4a79ab"/>
<polyline class="ic" points="721.1,438 732.8,435.8 743.3,434.6 753.9,431.7 771.7,426.9 787.9,424.4 808.1,422 826.7,418 843.7,415.5 851,412.7 857.1,412.7 857.5,363 858.8,320 859.8,300 860.1,272 860.4,259.6 862.5,252.2 868.7,249.1 884.8,246 919.6,242.5 934.5,240.4 950.6,237.6 961.8,236.7 975.4,233.6 994,231.3 1008.9,228.6 1033.8,225.9 1057.3,222.4 1076.6,220.9 1078.4,218.7 1082.8,218.9"/>
<line x1="720.8" y1="165.3" x2="1082.9" y2="165.3" class="ib"/>
<line x1="720.8" y1="160.2" x2="720.8" y2="170.4" class="ib"/>
<line x1="1082.9" y1="160.2" x2="1082.9" y2="170.4" class="ib"/>
<text x="901.6" y="157.5" class="il">1.00</text>
<line x1="720.5" y1="840.6" x2="1083.2" y2="840.6" class="mb"/>
<line x1="720.5" y1="836" x2="720.5" y2="846" class="mb"/>
<line x1="1083.2" y1="836" x2="1083.2" y2="846" class="mb"/>
<line x1="1077.4" y1="824.8" x2="1077.4" y2="840.6" class="mb"/>
<text x="901.9" y="858.5" class="ml">36.057</text>
<text x="901.9" y="872.5" class="ml">(s)</text>
<line x1="1260.5" y1="118" x2="1260.5" y2="893" class="cur"/>
<circle cx="1260.7" cy="806.2" r="4" class="cc"/>
<text x="1261" y="127.5" class="c1">1.775</text>
<text x="1260.7" y="139" class="c2">223.260 Hz</text>
<rect x="104.3" y="117.4" width="1264.3" height="776.1" class="fr"/>
<text x="736" y="925" class="at">X (PPM)</text>
<text transform="translate(57,505) rotate(-90)" class="at">Y (ARBITRARY)</text>
</svg>

<div id="panel" class="abs">
 <div class="ph" style="top:0;height:47.5px;border-bottom:1px solid #e6e6e6"><div class="pht" style="top:17px">Info</div></div>
 <div class="ph" style="top:48px;height:65px"><div class="pht" style="top:25px">Multiplicity</div></div>
 <div class="abs" style="left:0;top:113px;width:444px;height:60px;background:#999"></div>
</div>
<svg class="abs" style="left:1775.3px;top:130.2px;overflow:visible" width="22" height="22"><path transform="translate(0,0) scale(0.92)" d="M16.59 8.59L12 13.17 7.41 8.59 6 10l6 6 6-6z" fill="#5f5f5f"/></svg>
<svg class="abs" style="left:1775.3px;top:186px;overflow:visible" width="22" height="22"><path transform="translate(0,0) scale(0.92)" d="M12 8l-6 6 1.41 1.41L12 10.83l4.59 4.58L18 14z" fill="#5f5f5f"/></svg>
<svg class="abs" style="left:1771.4px;top:236.3px;overflow:visible" width="24" height="24"><path transform="translate(0,0) scale(1)" d="M17.65 6.35C16.2 4.9 14.21 4 12 4c-4.42 0-7.99 3.58-7.99 8s3.57 8 7.99 8c3.73 0 6.84-2.55 7.73-6h-2.08c-.82 2.33-3.04 4-5.65 4-3.31 0-6-2.69-6-6s2.69-6 6-6c1.66 0 3.14.69 4.22 1.78L13 11h7V4l-2.35 2.35z" fill="#fff"/></svg>
<svg class="abs" style="left:1770.5px;top:289.8px;overflow:visible" width="24" height="24"><path transform="translate(0,0) scale(1)" d="M14.59 8L12 10.59 9.41 8 8 9.41 10.59 12 8 14.59 9.41 16 12 13.41 14.59 16 16 14.59 13.41 12 16 9.41 14.59 8zM12 2C6.47 2 2 6.470 2 12s4.47 10 10 10 10-4.47 10-10S17.53 2 12 2zm0 18c-4.41 0-8-3.59-8-8s3.59-8 8-8 8 3.59 8 8-3.59 8-8 8z" fill="#e3261c"/></svg>
<svg class="abs" style="left:1404.5px;top:237px;overflow:visible" width="18" height="18"><rect x="0" y="0" width="18" height="18" rx="2.2" fill="#fff"/><path d="M2.3,8.3 L7.1,13.3 L15.6,4.5" fill="none" stroke="#999" stroke-width="1.7"/></svg>
<svg class="abs" style="left:1430px;top:236px;overflow:visible" width="22" height="20"><ellipse cx="10.8" cy="9.7" rx="9.3" ry="8.2" fill="none" stroke="#fff" stroke-width="1.7"/></svg>
<div class="abs" style="left:1431px;top:239px;width:20px;text-align:center;font-size:12px;line-height:14px;color:#f4f4f4">1</div>
<div class="abs" style="left:1456.5px;top:239px;font-size:12px;line-height:14px;color:#f4f4f4;white-space:nowrap">36.057 (ppm)</div>
<div class="abs" style="left:1533.5px;top:236px;width:120px;height:26.5px;border:1px solid #7d7d7d;border-radius:4px"></div>
<div class="abs" style="left:1547.5px;top:240px;font-size:13px;line-height:15px;color:#f4f4f4">s</div>
<div class="abs" style="left:1436.5px;top:263.3px;width:260px;height:26.5px;border:1px solid #7d7d7d;border-radius:4px"></div>
<div class="abs" style="left:1450.5px;top:266.5px;font-size:13px;line-height:15px;color:#f4f4f4">J</div>
<div class="abs" style="left:1462px;top:266.5px;font-size:13px;line-height:15px;color:#f4f4f4">=</div>
<div class="abs" style="left:1481.8px;top:266.5px;font-size:13px;line-height:15px;color:#f4f4f4">-</div>
<div class="abs" style="left:1666px;top:266.5px;font-size:13px;line-height:15px;color:#f4f4f4">Hz</div>
<div class="abs" style="left:1572px;top:297px;font-size:14px;line-height:16px;color:#222;white-space:nowrap">(36.0570, 5.01e+7)</div>
</body></html>
